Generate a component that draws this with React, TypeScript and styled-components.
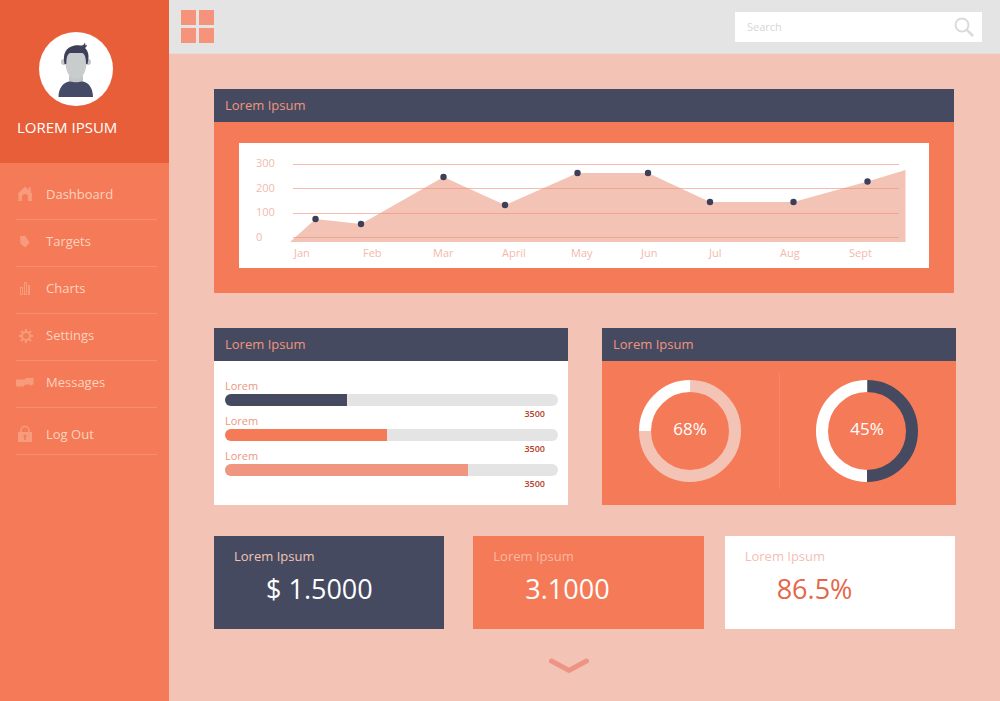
import React from 'react';
import styled, { createGlobalStyle } from 'styled-components';

const color = {
  orange: '#f57a58',
  ember: '#e75e38',
  blush: '#f3c4b5',
  salmon: '#f0957f',
  navy: '#454a60',
  grey: '#e4e4e4',
  white: '#ffffff',
};

const GlobalStyle = createGlobalStyle`
  *, *::before, *::after { box-sizing: border-box; }
  body {
    margin: 0;
    background: ${color.blush};
    font-family: 'Open Sans', 'Noto Sans', sans-serif;
  }
  h1, h2, p, ul { margin: 0; padding: 0; font-weight: 400; }
  button, input { font-family: inherit; }
`;

const Page = styled.div`
  display: flex;
  min-height: 100vh;
`;

const Sidebar = styled.aside`
  flex: 0 0 169px;
  background: ${color.orange};
`;

const Profile = styled.div`
  height: 163px;
  padding: 32px 17px 0;
  background: ${color.ember};
`;

const Avatar = styled.svg`
  display: block;
  width: 74px;
  height: 74px;
  margin-left: 22px;
`;

const UserName = styled.p`
  margin-top: 9px;
  color: ${color.white};
  font-size: 15px;
  font-weight: 500;
  line-height: 24px;
  white-space: nowrap;
`;

const Menu = styled.ul`
  padding: 10px 12px 0 16px;
  list-style: none;
`;

const MenuItem = styled.li`
  height: 47px;
  border-bottom: 1px solid #f68f70;
`;

const MenuLink = styled.a<{ $last?: boolean }>`
  display: flex;
  align-items: center;
  gap: 12px;
  height: 100%;
  padding-top: ${(p) => (p.$last ? 6 : 0)}px;
  padding-bottom: ${(p) => (p.$last ? 0 : 4)}px;
  color: #fdd3be;
  font-size: 13px;
  line-height: 20px;
  font-weight: 500;
  text-decoration: none;
`;

const MenuIcon = styled.svg`
  flex: none;
  width: 18px;
  height: 18px;
  color: #f89b7d;
`;

const Content = styled.div`
  flex: 1;
  min-width: 0;
`;

const TopBar = styled.header`
  display: flex;
  align-items: center;
  justify-content: space-between;
  height: 54px;
  padding: 0 18px 0 12px;
  background: ${color.grey};
  border-bottom: 1px solid #e9dcd8;
`;

const GridButton = styled.button`
  display: grid;
  grid-template-columns: 15px 15px;
  gap: 3px;
  padding: 0;
  border: 0;
  background: none;
  cursor: pointer;
`;

const Tile = styled.span`
  height: 15px;
  background: #f5947b;
`;

const SearchForm = styled.form`
  display: flex;
  align-items: center;
  width: 247px;
  height: 30px;
  padding: 0 8px 0 12px;
  background: ${color.white};
`;

const SearchInput = styled.input`
  flex: 1;
  min-width: 0;
  height: 100%;
  padding: 0;
  border: 0;
  outline: 0;
  background: none;
  color: #888888;
  font-size: 11px;
  &::placeholder { color: #d6d6d6; opacity: 1; }
`;

const SearchButton = styled.button`
  display: flex;
  padding: 0;
  border: 0;
  background: none;
  color: #dadada;
  cursor: pointer;
`;

const Main = styled.main`
  display: flex;
  flex-direction: column;
  padding: 35px 44px 24px 45px;
`;

const Wide = styled.div`
  padding-right: 2px;
`;

const Pair = styled.div`
  display: grid;
  grid-template-columns: 1fr 1fr;
  gap: 34px;
  margin-top: 35px;
`;

const Panel = styled.section<{ $fill: string }>`
  display: flex;
  flex-direction: column;
  background: ${(p) => p.$fill};
`;

const PanelTitle = styled.h2`
  height: 33px;
  padding: 0 11px;
  background: ${color.navy};
  color: ${color.salmon};
  font-size: 13px;
  font-weight: 500;
  line-height: 33px;
`;

const ChartBody = styled.div`
  padding: 21px 25px 25px;
`;

const Chart = styled.svg`
  display: block;
  width: 100%;
  height: auto;
  background: ${color.white};
  text { font-size: 11px; fill: #f3b9ae; }
`;

const Bars = styled.div`
  height: 144px;
  padding: 18px 10px 0 11px;
`;

const BarRow = styled.div`
  margin-bottom: -8px;
`;

const BarLabel = styled.p`
  padding-bottom: 2px;
  color: ${color.salmon};
  font-size: 11px;
  line-height: 13px;
`;

const Track = styled.div`
  height: 12px;
  overflow: hidden;
  border-radius: 6px;
  background: ${color.grey};
`;

const Fill = styled.div<{ $tone: string }>`
  height: 100%;
  background: ${(p) => p.$tone};
`;

const BarValue = styled.p`
  padding-right: 13px;
  color: #b5402c;
  font-size: 9px;
  font-weight: 600;
  line-height: 16px;
  text-align: right;
`;

const Rings = styled.div`
  display: grid;
  grid-template-columns: 1fr 1fr;
  flex: 1;
  padding: 12px 1px 16px 0;
`;

const RingCell = styled.div`
  display: flex;
  align-items: center;
  justify-content: center;
  & + & { border-left: 1px solid #f58a6b; }
`;

const RingSvg = styled.svg`
  display: block;
  width: 102px;
  height: 102px;
  text { font-size: 17px; font-weight: 500; fill: ${color.white}; text-anchor: middle; }
`;

const Stats = styled.div`
  display: flex;
  margin-top: 31px;
  padding-right: 1px;
`;

const StatCard = styled.section<{ $fill: string; $gap: number }>`
  flex: 1;
  height: 93px;
  margin-right: ${(p) => p.$gap}px;
  padding: 10px 20px 0;
  background: ${(p) => p.$fill};
`;

const StatLabel = styled.h2<{ $tone: string }>`
  color: ${(p) => p.$tone};
  font-size: 13px;
  font-weight: 500;
  line-height: 20px;
`;

const StatValue = styled.p<{ $tone: string }>`
  padding-left: 32px;
  color: ${(p) => p.$tone};
  font-size: 27px;
  line-height: 46px;
  white-space: nowrap;
`;

const MoreButton = styled.button`
  align-self: center;
  margin: 28px 32px 0 0;
  padding: 0;
  border: 0;
  background: none;
  cursor: pointer;
  svg { display: block; }
`;

const icons: Record<string, React.ReactNode> = {
  Dashboard: (
    <path
      d="M1.5 9 9 1.5l3.6 3.4V2.2h2.2v5L16.5 9l-.6 1V16h-4v-4a2.900 2.900 0 0 0-5.800 0v4H2.500V9.500z"
      fill="currentColor"
    />
  ),
  Targets: <path d="M4 4.500 9 3.500l4.500 7-4 5L4.500 12z" fill="currentColor" />,
  Charts: (
    <g fill="none" stroke="currentColor">
      <rect x="4.500" y="8.500" width="2" height="7" />
      <rect x="8.500" y="3.500" width="2" height="12" />
      <rect x="12.500" y="6.500" width="1" height="9" />
    </g>
  ),
  Settings: (
    <g fill="none" stroke="currentColor" strokeWidth="2">
      <circle cx="10" cy="10" r="4" />
      <path d="M10 3v3M10 14v3M3 10h3M14 10h3M5 5l2.200 2.200M12.800 12.800 15 15M15 5l-2.200 2.200M7.200 12.800 5 15" />
    </g>
  ),
  Messages: (
    <path d="M0 6.500h9L10 5h7.500v6.500H16L15 13l-1.500-1.500H10V12H8v1.500H3L1.500 15v-2H0z" fill="currentColor" />
  ),
  'Log Out': (
    <g>
      <path d="M5 7V5.500a4 4 0 0 1 8 0V7" fill="none" stroke="currentColor" strokeWidth="1.500" />
      <path
        d="M2 7h14v10H2zM9 9.500a1.500 1.500 0 0 0-.8 2.800V15h1.600v-2.700A1.500 1.500 0 0 0 9 9.500z"
        fill="currentColor"
        fillRule="evenodd"
      />
    </g>
  ),
};

const menu = ['Dashboard', 'Targets', 'Charts', 'Settings', 'Messages', 'Log Out'];

const scale = [
  { label: '300', line: 21, base: 24 },
  { label: '200', line: 45, base: 49 },
  { label: '100', line: 70, base: 73 },
  { label: '0', line: 94, base: 98 },
];

const months: [string, number][] = [
  ['Jan', 55],
  ['Feb', 124],
  ['Mar', 194],
  ['April', 263],
  ['May', 332],
  ['Jun', 402],
  ['Jul', 470],
  ['Aug', 541],
  ['Sept', 610],
];

const points: [number, number][] = [
  [76.5, 76],
  [122, 81],
  [204.5, 34],
  [266, 62],
  [338.5, 30],
  [409, 30],
  [471, 59],
  [554.5, 59],
  [628.5, 38.5],
];

const bars = [
  { share: 36.6, tone: color.navy },
  { share: 48.7, tone: color.orange },
  { share: 73, tone: color.salmon },
];

const stats = [
  { value: '$ 1.5000', fill: color.navy, label: color.blush, tone: color.white, gap: 29 },
  { value: '3.1000', fill: color.orange, label: '#f9b9a2', tone: color.white, gap: 21 },
  { value: '86.5%', fill: color.white, label: '#f3c0b4', tone: '#e4674a', gap: 0 },
];

function AreaChart() {
  return (
    <Chart viewBox="0 0 690 125" role="img" aria-label="Values from January to September">
      <polygon
        points={`51,99 ${points.map((p) => p.join(',')).join(' ')} 666.5,27 666.5,99`}
        fill={color.blush}
      />
      {scale.map((s) => (
        <g key={s.label}>
          <path d={`M54 ${s.line + 0.5}H660`} stroke="#ee8f7c" strokeOpacity="0.6" />
          <text x="17" y={s.base}>{s.label}</text>
        </g>
      ))}
      {points.map(([x, y]) => (
        <circle key={x} cx={x} cy={y} r="3.2" fill="#3c3f57" />
      ))}
      {months.map(([name, x]) => (
        <text key={name} x={x} y="114">{name}</text>
      ))}
    </Chart>
  );
}

function Ring({ label, base, arc, share }: { label: string; base: string; arc: string; share: number }) {
  const length = 2 * Math.PI * 45;
  return (
    <RingSvg viewBox="0 0 102 102" role="img" aria-label={label}>
      <circle
        cx="51"
        cy="51"
        r="45"
        fill="none"
        stroke={base}
        strokeWidth="12"
        strokeDasharray={`${length * (1 - share)} ${length}`}
        transform="rotate(-90 51 51)"
      />
      <circle
        cx="51"
        cy="51"
        r="45"
        fill="none"
        stroke={arc}
        strokeWidth="12"
        strokeDasharray={`${length * share} ${length}`}
        transform={`rotate(${270 - 360 * share} 51 51)`}
      />
      <text x="51" y="55">{label}</text>
    </RingSvg>
  );
}

export default function App() {
  return (
    <Page>
      <GlobalStyle />
      <Sidebar>
        <Profile>
          <Avatar viewBox="0 0 74 74" aria-hidden="true">
            <circle cx="37" cy="37" r="37" fill="#fff" />
            <path d="M30 44h14v9H30z" fill="#c3c6c8" />
            <circle cx="25" cy="30" r="3" fill="#c3c6c8" />
            <circle cx="49" cy="30" r="3" fill="#c3c6c8" />
            <path d="M26 25c0-7 5-10 11-10s11 3 11 10c0 12-3 22-11 22S26 37 26 25z" fill="#c9cccd" />
            <path
              d="M25.500 32c-2-10 1-16.500 10-18.500 4-.7 6 .2 7.500 0 1.500-.5 2.500-1.500 2.800-3 .7 1.200.7 2 .2 3l2-.8c-.3 1.700-1 2.500-2 3.300 3.500 3 4.500 8.500 2.500 16h-1.500c0-5-.5-9-3.500-11H31c-3.500 2-3.500 6-3.700 11z"
              fill="#3d4058"
            />
            <path d="M19.500 65c0-9 5-15.500 12-15.500 3 1 8 1 11 0 7 0 11.500 6.500 11.500 15.500z" fill="#454a66" />
          </Avatar>
          <UserName>LOREM IPSUM</UserName>
        </Profile>
        <nav aria-label="Main">
          <Menu>
            {menu.map((name) => (
              <MenuItem key={name}>
                <MenuLink href="#" $last={name === 'Log Out'}>
                  <MenuIcon viewBox="0 0 18 18" aria-hidden="true">{icons[name]}</MenuIcon>
                  {name}
                </MenuLink>
              </MenuItem>
            ))}
          </Menu>
        </nav>
      </Sidebar>
      <Content>
        <TopBar>
          <GridButton type="button" aria-label="Apps">
            <Tile />
            <Tile />
            <Tile />
            <Tile />
          </GridButton>
          <SearchForm role="search">
            <SearchInput type="text" placeholder="Search" aria-label="Search" />
            <SearchButton type="button" aria-label="Run search">
              <svg width="20" height="20" viewBox="0 0 20 20" fill="none" stroke="currentColor" strokeWidth="2">
                <circle cx="8" cy="8" r="6.500" />
                <path d="M12.800 12.800 19 19" strokeWidth="2.500" />
              </svg>
            </SearchButton>
          </SearchForm>
        </TopBar>
        <Main>
          <Wide>
            <Panel $fill={color.orange}>
              <PanelTitle>Lorem Ipsum</PanelTitle>
              <ChartBody>
                <AreaChart />
              </ChartBody>
            </Panel>
          </Wide>
          <Pair>
            <Panel $fill={color.white}>
              <PanelTitle>Lorem Ipsum</PanelTitle>
              <Bars>
                {bars.map((bar) => (
                  <BarRow key={bar.tone}>
                    <BarLabel>Lorem</BarLabel>
                    <Track>
                      <Fill $tone={bar.tone} style={{ width: `${bar.share}%` }} />
                    </Track>
                    <BarValue>3500</BarValue>
                  </BarRow>
                ))}
              </Bars>
            </Panel>
            <Panel $fill={color.orange}>
              <PanelTitle>Lorem Ipsum</PanelTitle>
              <Rings>
                <RingCell>
                  <Ring label="68%" base={color.blush} arc={color.white} share={0.25} />
                </RingCell>
                <RingCell>
                  <Ring label="45%" base={color.navy} arc={color.white} share={0.5} />
                </RingCell>
              </Rings>
            </Panel>
          </Pair>
          <Stats>
            {stats.map((s) => (
              <StatCard key={s.value} $fill={s.fill} $gap={s.gap}>
                <StatLabel $tone={s.label}>Lorem Ipsum</StatLabel>
                <StatValue $tone={s.tone}>{s.value}</StatValue>
              </StatCard>
            ))}
          </Stats>
          <MoreButton type="button" aria-label="Show more">
            <svg width="40" height="18" viewBox="0 0 40 18">
              <path d="M2.500 4 20 13.500 37.500 4" fill="none" stroke="#ee9484" strokeWidth="5" strokeLinecap="round" />
            </svg>
          </MoreButton>
        </Main>
      </Content>
    </Page>
  );
}
